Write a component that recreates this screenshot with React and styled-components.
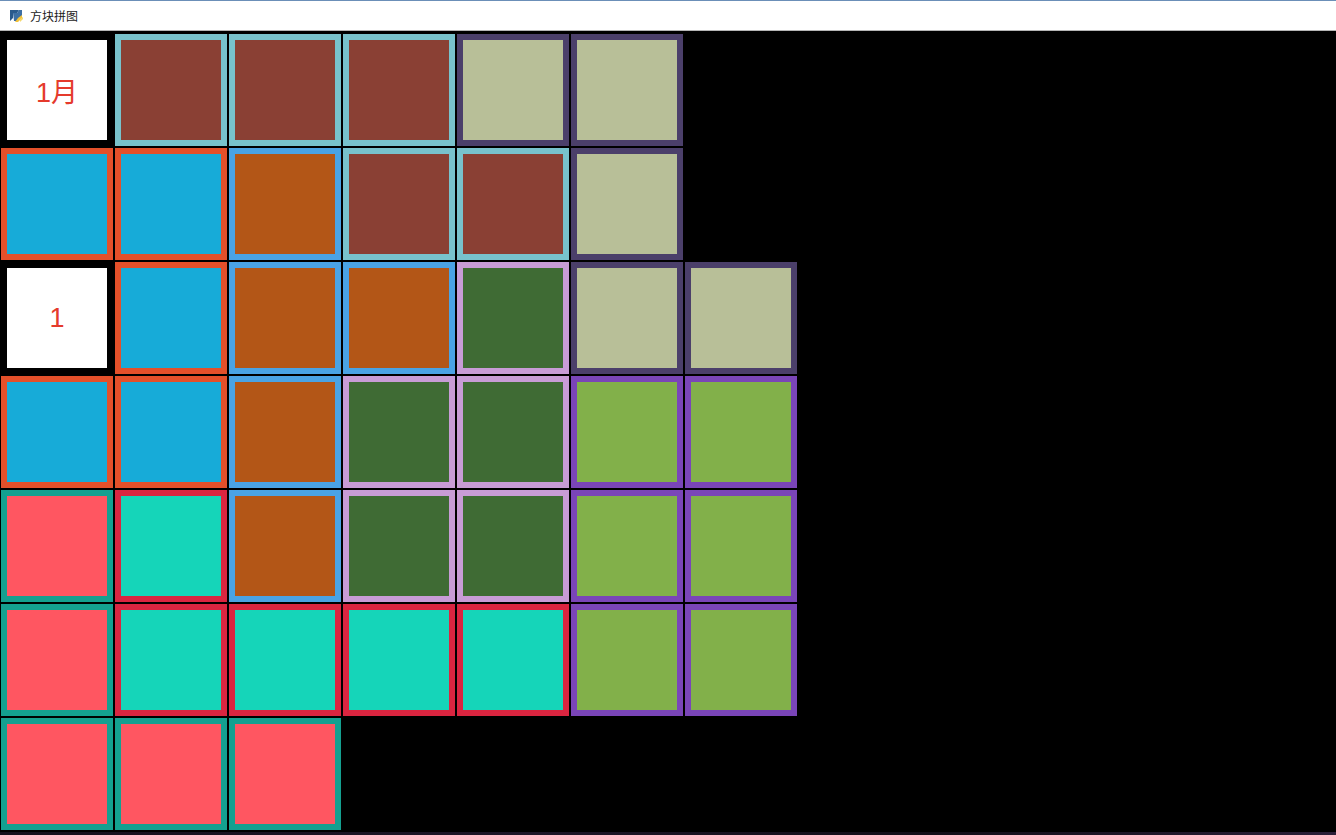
import React from "react";
import styled, { createGlobalStyle } from "styled-components";

const Global = createGlobalStyle`
  html, body { margin: 0; padding: 0; background: #000; }
  body { font-family: "Liberation Sans", "Noto Sans CJK SC", sans-serif; overflow: hidden; }
`;

const Window = styled.div`
  width: 1336px;
  height: 835px;
  display: flex;
  flex-direction: column;
  background: #000;
`;

const TitleBar = styled.div`
  height: 31px;
  flex: 0 0 31px;
  background: #fff;
  border-top: 1px solid #6b8fb8;
  border-bottom: 1px solid #b5b5b5;
  box-sizing: border-box;
  display: flex;
  align-items: center;
  padding-left: 9px;
  gap: 6px;
`;

const Title = styled.span`
  font-family: "Noto Sans CJK SC", "Liberation Sans", sans-serif;
  font-size: 12px;
  color: #1a1a1a;
  line-height: 1;
`;

const Canvas = styled.div`
  flex: 1;
  padding-top: 2px;
  background: #000;
`;

const Board = styled.div`
  display: grid;
  grid-template-columns: repeat(7, 114px);
  grid-auto-rows: 114px;
`;

const Cell = styled.div`
  margin: 1px;
  border: 6px solid ${(p) => p.$edge};
  background: ${(p) => p.$fill};
  display: flex;
  align-items: center;
  justify-content: center;
  box-sizing: border-box;
`;

const Label = styled.span`
  color: #e53a2c;
  font-size: ${(p) => p.$size}px;
  font-family: "Liberation Sans", "Noto Sans CJK SC", sans-serif;
`;

const Empty = styled.div``;

const BottomStrip = styled.div`
  height: 3px;
  flex: 0 0 3px;
  background: linear-gradient(90deg, #14101c 0%, #1d1628 40%, #120e18 70%, #2a1f38 100%);
`;

const C = {
  W: { fill: "#ffffff", edge: "#000000" },
  BR: { fill: "#8a4034", edge: "#78c2cc" },
  KH: { fill: "#b8bf98", edge: "#4b3f6a" },
  BL: { fill: "#17abd8", edge: "#e4502a" },
  OR: { fill: "#b35617", edge: "#4aa3e4" },
  DG: { fill: "#3f6b34", edge: "#c89cd6" },
  LG: { fill: "#82b04a", edge: "#7a45b8" },
  SA: { fill: "#ff5661", edge: "#14a090" },
  TQ: { fill: "#15d5b9", edge: "#da2540" },
};

const rows = [
  [["W", "1月", 27], "BR", "BR", "BR", "KH", "KH", null],
  ["BL", "BL", "OR", "BR", "BR", "KH", null],
  [["W", "1", 27], "BL", "OR", "OR", "DG", "KH", "KH"],
  ["BL", "BL", "OR", "DG", "DG", "LG", "LG"],
  ["SA", "TQ", "OR", "DG", "DG", "LG", "LG"],
  ["SA", "TQ", "TQ", "TQ", "TQ", "LG", "LG"],
  ["SA", "SA", "SA", null, null, null, null],
];

function AppIcon() {
  return (
    <svg width="15" height="15" viewBox="0 0 15 15">
      <path d="M1 2h9l-2 3H4v5L1 13z" fill="#2a5a8c" />
      <path d="M4 5h4l2-3h3v7l-4 4H5z" fill="#3d6fa3" />
      <path d="M9 10l4-3v3l-4 4H6z" fill="#f2c23a" />
      <path d="M11 11l3-2v2l-3 3z" fill="#f5d76a" />
    </svg>
  );
}

export default function App() {
  return (
    <Window>
      <Global />
      <TitleBar>
        <AppIcon />
        <Title>方块拼图</Title>
      </TitleBar>
      <Canvas>
        <Board>
          {rows.flatMap((row, r) =>
            row.map((c, i) => {
              if (!c) return <Empty key={`${r}-${i}`} />;
              if (Array.isArray(c)) {
                const [k, text, size] = c;
                return (
                  <Cell key={`${r}-${i}`} $fill={C[k].fill} $edge={C[k].edge}>
                    <Label $size={size}>{text}</Label>
                  </Cell>
                );
              }
              return <Cell key={`${r}-${i}`} $fill={C[c].fill} $edge={C[c].edge} />;
            })
          )}
        </Board>
      </Canvas>
      <BottomStrip />
    </Window>
  );
}
